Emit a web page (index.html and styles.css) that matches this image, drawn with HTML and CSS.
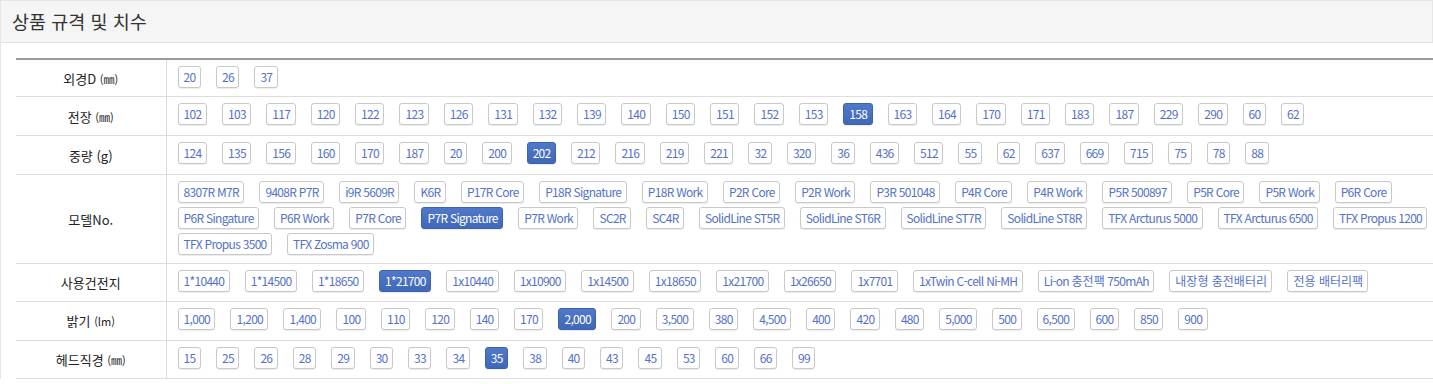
FILE: index.html
```html
<!DOCTYPE html>
<html lang="ko">
<head>
<meta charset="utf-8">
<title>상품 규격 및 치수</title>
<link rel="stylesheet" href="styles.css">
</head>
<body>
<div class="panel">
  <div class="panel-head"><h3 class="panel-title">상품 규격 및 치수</h3></div>
  <div class="panel-body">
    <table class="spec">
      <tr class="first">
        <th>외경D <span class="unit">(㎜)</span></th>
        <td><div class="chips">
          <span class="chip">20</span><span class="chip">26</span><span class="chip">37</span>
        </div></td>
      </tr>
      <tr>
        <th>전장 <span class="unit">(㎜)</span></th>
        <td><div class="chips">
          <span class="chip">102</span><span class="chip">103</span><span class="chip">117</span><span class="chip">120</span><span class="chip">122</span><span class="chip">123</span><span class="chip">126</span><span class="chip">131</span><span class="chip">132</span><span class="chip">139</span><span class="chip">140</span><span class="chip">150</span><span class="chip">151</span><span class="chip">152</span><span class="chip">153</span><span class="chip on">158</span><span class="chip">163</span><span class="chip">164</span><span class="chip">170</span><span class="chip">171</span><span class="chip">183</span><span class="chip">187</span><span class="chip">229</span><span class="chip">290</span><span class="chip">60</span><span class="chip">62</span>
        </div></td>
      </tr>
      <tr>
        <th>중량 <span class="unit-g">(g)</span></th>
        <td><div class="chips">
          <span class="chip">124</span><span class="chip">135</span><span class="chip">156</span><span class="chip">160</span><span class="chip">170</span><span class="chip">187</span><span class="chip">20</span><span class="chip">200</span><span class="chip on">202</span><span class="chip">212</span><span class="chip">216</span><span class="chip">219</span><span class="chip">221</span><span class="chip">32</span><span class="chip">320</span><span class="chip">36</span><span class="chip">436</span><span class="chip">512</span><span class="chip">55</span><span class="chip">62</span><span class="chip">637</span><span class="chip">669</span><span class="chip">715</span><span class="chip">75</span><span class="chip">78</span><span class="chip">88</span>
        </div></td>
      </tr>
      <tr>
        <th>모델No.</th>
        <td><div class="chips">
          <span class="chip">8307R M7R</span><span class="chip">9408R P7R</span><span class="chip">i9R 5609R</span><span class="chip">K6R</span><span class="chip">P17R Core</span><span class="chip">P18R Signature</span><span class="chip">P18R Work</span><span class="chip">P2R Core</span><span class="chip">P2R Work</span><span class="chip">P3R 501048</span><span class="chip">P4R Core</span><span class="chip">P4R Work</span><span class="chip">P5R 500897</span><span class="chip">P5R Core</span><span class="chip">P5R Work</span><span class="chip">P6R Core</span><span class="chip">P6R Singature</span><span class="chip">P6R Work</span><span class="chip">P7R Core</span><span class="chip on">P7R Signature</span><span class="chip">P7R Work</span><span class="chip">SC2R</span><span class="chip">SC4R</span><span class="chip">SolidLine ST5R</span><span class="chip">SolidLine ST6R</span><span class="chip">SolidLine ST7R</span><span class="chip">SolidLine ST8R</span><span class="chip">TFX Arcturus 5000</span><span class="chip">TFX Arcturus 6500</span><span class="chip">TFX Propus 1200</span><span class="chip">TFX Propus 3500</span><span class="chip">TFX Zosma 900</span>
        </div></td>
      </tr>
      <tr>
        <th>사용건전지</th>
        <td><div class="chips">
          <span class="chip">1*10440</span><span class="chip">1*14500</span><span class="chip">1*18650</span><span class="chip on">1*21700</span><span class="chip">1x10440</span><span class="chip">1x10900</span><span class="chip">1x14500</span><span class="chip">1x18650</span><span class="chip">1x21700</span><span class="chip">1x26650</span><span class="chip">1x7701</span><span class="chip">1xTwin C-cell Ni-MH</span><span class="chip">Li-on <span class="ko">충전팩</span> 750mAh</span><span class="chip ko">내장형 충전배터리</span><span class="chip ko">전용 배터리팩</span>
        </div></td>
      </tr>
      <tr>
        <th>밝기 <span class="unit">(lm)</span></th>
        <td><div class="chips">
          <span class="chip">1,000</span><span class="chip">1,200</span><span class="chip">1,400</span><span class="chip">100</span><span class="chip">110</span><span class="chip">120</span><span class="chip">140</span><span class="chip">170</span><span class="chip on">2,000</span><span class="chip">200</span><span class="chip">3,500</span><span class="chip">380</span><span class="chip">4,500</span><span class="chip">400</span><span class="chip">420</span><span class="chip">480</span><span class="chip">5,000</span><span class="chip">500</span><span class="chip">6,500</span><span class="chip">600</span><span class="chip">850</span><span class="chip">900</span>
        </div></td>
      </tr>
      <tr>
        <th>헤드직경 <span class="unit">(㎜)</span></th>
        <td><div class="chips">
          <span class="chip">15</span><span class="chip">25</span><span class="chip">26</span><span class="chip">28</span><span class="chip">29</span><span class="chip">30</span><span class="chip">33</span><span class="chip">34</span><span class="chip on">35</span><span class="chip">38</span><span class="chip">40</span><span class="chip">43</span><span class="chip">45</span><span class="chip">53</span><span class="chip">60</span><span class="chip">66</span><span class="chip">99</span>
        </div></td>
      </tr>
    </table>
  </div>
</div>
</body>
</html>
```
FILE: styles.css
```css
* { box-sizing: border-box; }
html, body { margin: 0; padding: 0; background: #fff; overflow: hidden; }
body {
  font-family: "Noto Sans CJK KR", "Noto Sans", sans-serif;
  color: #333;
  width: 1433px;
}
.panel {
  border-top: 1px solid #e6e6e6;
  border-left: 1px solid #e6e6e6;
}
.panel-head {
  height: 42px;
  background: #f5f5f5;
  border-bottom: 1px solid #e0e0e0;
  border-right: 1px solid #e6e6e6;
  display: flex;
  align-items: center;
  padding: 0 11px;
}
.panel-title {
  margin: 0;
  font-size: 18.5px;
  font-weight: 400;
  color: #333;
  line-height: 1;
  padding-bottom: 1px;
}
.panel-body {
  padding: 15px 0 0 15px;
}
.spec {
  width: calc(100% + 1px);
  border-collapse: collapse;
  border-top: 2px solid #9a9a9a;
}
.spec th {
  width: 150px;
  font-weight: 400;
  font-size: 13px;
  color: #222;
  text-align: center;
  vertical-align: middle;
  border-right: 1px solid #ddd;
  border-bottom: 1px solid #ddd;
  padding: 0;
}
.spec th .unit { font-size: 11px; }
.spec th .unit-g { font-size: 13px; }
.spec td {
  padding: 6px 0 8px 11px;
  border-bottom: 1px solid #ddd;
  vertical-align: top;
}
.spec .first td { padding-bottom: 6px; }
.chips {
  display: flex;
  flex-wrap: wrap;
  gap: 4px 15px;
  min-height: 24px;
  align-content: flex-start;
}
.spec tr:nth-child(n+5) .chips { min-height: 23.34px; }
.chip {
  display: inline-block;
  height: 22px;
  line-height: 20px;
  padding: 0 4.4px 0 5.1px;
  font-size: 12px;
  letter-spacing: -0.7px;
  color: #5572c8;
  background: #fff;
  border: 1px solid #c9c9c9;
  border-radius: 3px;
  box-shadow: 0 1px 1px rgba(0, 0, 0, 0.08);
  white-space: nowrap;
}
.chip.ko, .chip .ko { letter-spacing: 0; }
.chip.on {
  color: #fff;
  background: linear-gradient(#5079c9, #3f68ba);
  border-color: #3d63b0;
}
```
